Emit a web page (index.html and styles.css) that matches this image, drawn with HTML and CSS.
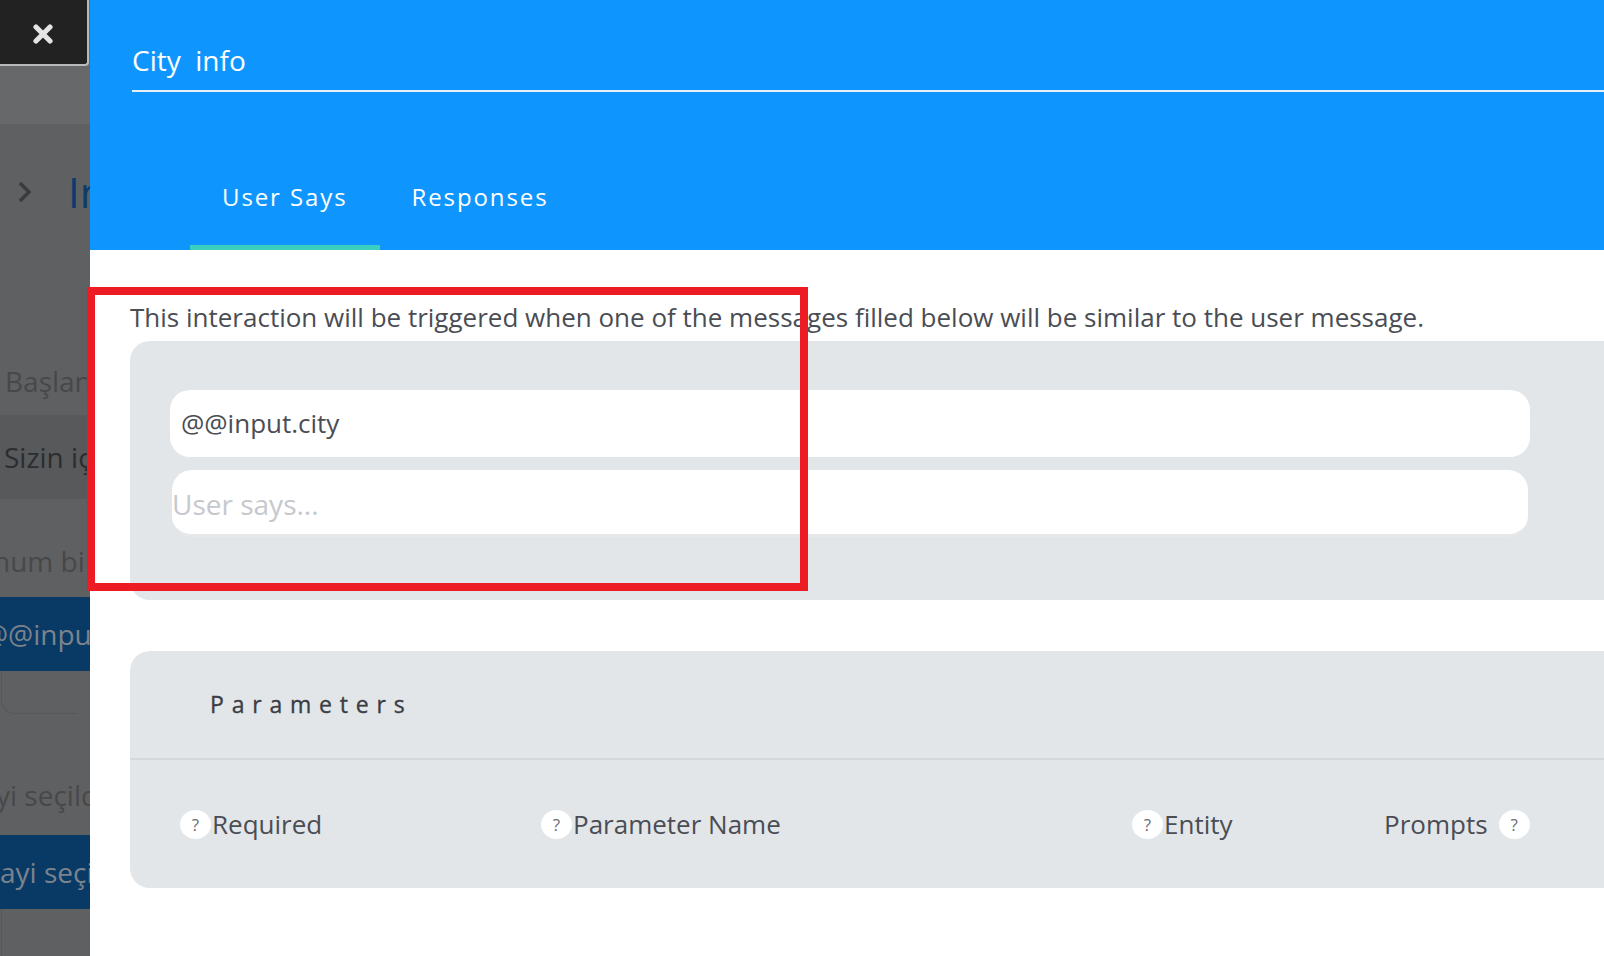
FILE: index.html
```html
<!DOCTYPE html>
<html lang="en">
<head>
<meta charset="utf-8">
<title>City info</title>
<link rel="stylesheet" href="styles.css">
</head>
<body>
<aside class="backdrop">
  <div class="bd-top">
    <button class="close" aria-label="Close">
      <svg width="22" height="20" viewBox="0 0 22 20"><path d="M4 3 L18 17 M18 3 L4 17" stroke="#e4e4e4" stroke-width="5.2" stroke-linecap="round"/></svg>
    </button>
  </div>
  <div class="bd-crumb">
    <svg class="chev" width="16" height="24" viewBox="0 0 16 24"><path d="M3 3 L12 12 L3 21" fill="none" stroke="#3a3b3c" stroke-width="3.4"/></svg>
    <span class="crumb-title">Intents</span>
  </div>
  <div class="bd-line bd-start">Başlangıç</div>
  <div class="bd-row">Sizin için</div>
  <div class="bd-line bd-info">hum bilgi</div>
  <div class="bd-band bd-band1">@@input.city</div>
  <div class="bd-box"></div>
  <div class="bd-line bd-sel">yi seçildi</div>
  <div class="bd-band bd-band2">ayi seçildi</div>
  <div class="bd-rest"></div>
</aside>

<main class="panel">
  <header class="panel-head">
    <h1 class="title">City&nbsp; info</h1>
    <nav class="tabs">
      <a class="tab active">User Says</a>
      <a class="tab">Responses</a>
    </nav>
  </header>

  <section class="panel-body">
    <p class="desc">This interaction will be triggered when one of the messages filled below will be similar to the user message.</p>

    <div class="card says">
      <div class="say filled">@@input.city</div>
      <div class="say empty">User says...</div>
    </div>

    <div class="card params">
      <h2 class="params-title">Parameters</h2>
      <div class="params-head">
        <div class="col"><span class="q">?</span>Required</div>
        <div class="col"><span class="q">?</span>Parameter Name</div>
        <div class="col"><span class="q">?</span>Entity</div>
        <div class="col prompts">Prompts<span class="q">?</span></div>
      </div>
    </div>
  </section>
</main>

<div class="annot"></div>
</body>
</html>
```

FILE: styles.css
```css
html, body {
  margin: 0;
  padding: 0;
}
body {
  width: 1604px;
  height: 956px;
  overflow: hidden;
  display: flex;
  font-family: "Open Sans", "Noto Sans", sans-serif;
  background: #fff;
  position: relative;
}

/* ---------- backdrop (page behind modal) ---------- */
.backdrop {
  width: 90px;
  flex-shrink: 0;
  background: #5f6062;
  overflow: hidden;
  display: flex;
  flex-direction: column;
  white-space: nowrap;
}
.bd-top {
  height: 124px;
  background: #67686a;
  flex-shrink: 0;
}
.close {
  display: flex;
  align-items: center;
  justify-content: center;
  width: 89px;
  height: 66px;
  box-sizing: border-box;
  padding: 4px 2px 0 0;
  margin: 0;
  background: #222222;
  border: 0;
  border-right: 2px solid #b9b9b9;
  border-bottom: 2px solid #b9b9b9;
  border-bottom-right-radius: 4px;
}
.bd-crumb {
  height: 44px;
  margin-top: 46px;
  display: flex;
  align-items: center;
}
.chev {
  margin-left: 17px;
  flex-shrink: 0;
}
.crumb-title {
  margin-left: 35px;
  font-size: 42px;
  line-height: 44px;
  color: #0c3c6b;
}
.bd-line {
  font-size: 28px;
  line-height: 38px;
  color: #47484a;
}
.bd-start {
  padding-left: 5px;
  margin-top: 148px;
}
.bd-row {
  margin-top: 15px;
  height: 84px;
  background: #58595b;
  font-size: 28px;
  line-height: 84px;
  color: #2c2d2f;
  padding-left: 4px;
}
.bd-info {
  margin-top: 43px;
  margin-left: -7px;
}
.bd-band {
  height: 74px;
  background: #093a66;
  color: #7b838c;
  font-size: 28px;
  line-height: 74px;
}
.bd-band1 {
  margin-top: 17px;
  margin-left: -17px;
}
.bd-box {
  height: 42px;
  width: 76px;
  margin-left: 1px;
  border-left: 1px solid #56575a;
  border-bottom: 1px solid #56575a;
  border-bottom-left-radius: 14px;
}
.bd-sel {
  margin-top: 62px;
  margin-left: -4px;
}
.bd-band2 {
  margin-top: 21px;
}
.bd-rest {
  flex: 1;
  margin-left: 1px;
  border-left: 1px solid #58595b;
}

/* ---------- modal panel ---------- */
.panel {
  flex: 1;
  overflow: hidden;
  display: flex;
  flex-direction: column;
}
.panel-head {
  height: 250px;
  flex-shrink: 0;
  background: #0f96fe;
  display: flex;
  flex-direction: column;
}
.title {
  margin: 0 0 0 42px;
  padding: 37px 0 7px;
  font-size: 28px;
  line-height: 46px;
  font-weight: 400;
  color: #ffffff;
  border-bottom: 2px solid #e6eef7;
}
.tabs {
  margin-top: auto;
  margin-left: 100px;
  display: flex;
}
.tab {
  padding: 0 32px 31px;
  font-size: 24px;
  line-height: 34px;
  letter-spacing: 1.9px;
  color: #ffffff;
  border-bottom: 5px solid transparent;
}
.tab.active {
  border-bottom-color: #3ccfbf;
}

.panel-body {
  padding-left: 40px;
}
.desc {
  margin: 50px 0 7px;
  font-size: 26px;
  line-height: 34px;
  color: #4a4d54;
  white-space: nowrap;
}
.card {
  width: 1500px;
  background: #e2e6e9;
  border-radius: 20px;
}
.says {
  padding: 49px 0 63px 40px;
  display: flex;
  flex-direction: column;
  gap: 13px;
}
.say {
  box-sizing: border-box;
  width: 1360px;
  height: 67px;
  background: #ffffff;
  border-radius: 20px;
  font-size: 26px;
  line-height: 67px;
}
.say.filled {
  padding-left: 11px;
  color: #4a4d54;
}
.say.empty {
  width: 1356px;
  margin-left: 2px;
  padding-left: 0;
  font-size: 28px;
  color: #c5c8cc;
  border-bottom: 3px solid #e7e8ea;
  line-height: 68px;
}
.params {
  margin-top: 51px;
}
.params-title {
  margin: 0;
  height: 107px;
  padding-left: 80px;
  font-size: 23px;
  line-height: 107px;
  font-weight: 400;
  letter-spacing: 7.8px;
  color: #3a3d44;
  -webkit-text-stroke: 0.35px #3a3d44;
  border-bottom: 2px solid #d4d8dc;
}
.params-head {
  height: 128px;
  padding-left: 50px;
  display: grid;
  grid-template-columns: 361px 591px 252px auto;
  align-items: center;
}
.col {
  display: flex;
  align-items: center;
  font-size: 26px;
  color: #4a4d54;
}
.q {
  width: 31px;
  height: 29px;
  margin-right: 1px;
  border-radius: 50%;
  background: #ffffff;
  color: #6b6f76;
  font-size: 17px;
  line-height: 29px;
  text-align: center;
}
.prompts .q {
  margin: 0 0 0 11px;
}

/* ---------- red annotation frame ---------- */
.annot {
  position: absolute;
  left: 87px;
  top: 287px;
  width: 721px;
  height: 304px;
  box-sizing: border-box;
  border: 8px solid #ed1c24;
  pointer-events: none;
}
```
